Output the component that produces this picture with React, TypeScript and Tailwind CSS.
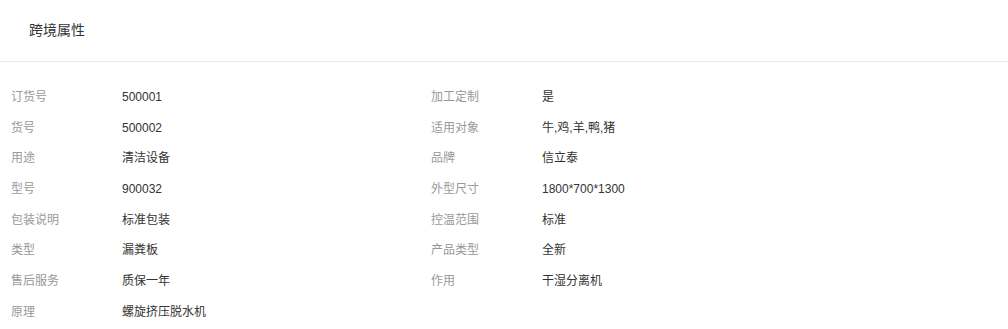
const left = [
  ['订货号', '500001'],
  ['货号', '500002'],
  ['用途', '清洁设备'],
  ['型号', '900032'],
  ['包装说明', '标准包装'],
  ['类型', '漏粪板'],
  ['售后服务', '质保一年'],
  ['原理', '螺旋挤压脱水机'],
];

const right = [
  ['加工定制', '是'],
  ['适用对象', '牛,鸡,羊,鸭,猪'],
  ['品牌', '信立泰'],
  ['外型尺寸', '1800*700*1300'],
  ['控温范围', '标准'],
  ['产品类型', '全新'],
  ['作用', '干湿分离机'],
];

function Column({ rows }: { rows: string[][] }) {
  return (
    <div className="w-[420px] pl-[11px] flex flex-col">
      {rows.map(([label, value]) => (
        <div key={label} className="flex items-center h-[30.7px] text-[12px]">
          <span className="w-[111px] text-[#999999]">{label}</span>
          <span className="text-[#333333]">{value}</span>
        </div>
      ))}
    </div>
  );
}

export default function App() {
  return (
    <div className="w-[1008px] h-[329px] bg-white font-['Liberation_Sans','Noto_Sans_CJK_SC',sans-serif] overflow-hidden">
      <div className="h-[62px] pl-[29px] flex items-center border-b border-[#e8e8e8] text-[14px] text-[#333333]">
        跨境属性
      </div>
      <div className="flex pt-[19.5px]">
        <Column rows={left} />
        <Column rows={right} />
      </div>
    </div>
  );
}
